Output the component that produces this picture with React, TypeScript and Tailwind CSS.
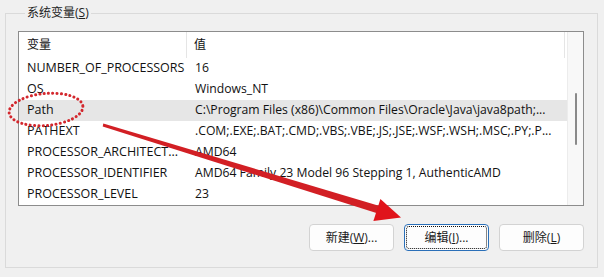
import React from "react";

interface EnvVar {
    name: string;
    value: string;
}

const rows: EnvVar[] = [
    { name: "NUMBER_OF_PROCESSORS", value: "16" },
    { name: "OS", value: "Windows_NT" },
    { name: "Path", value: "C:\\Program Files (x86)\\Common Files\\Oracle\\Java\\java8path;..." },
    { name: "PATHEXT", value: ".COM;.EXE;.BAT;.CMD;.VBS;.VBE;.JS;.JSE;.WSF;.WSH;.MSC;.PY;.P..." },
    { name: "PROCESSOR_ARCHITECT...", value: "AMD64" },
    { name: "PROCESSOR_IDENTIFIER", value: "AMD64 Family 23 Model 96 Stepping 1, AuthenticAMD" },
    { name: "PROCESSOR_LEVEL", value: "23" },
];

function WinButton({ label, hotkey, tail, focused }: { label: string; hotkey: string; tail?: string; focused?: boolean }) {
    return (
        <button
            className={`relative w-[85px] h-[27px] rounded-[4px] text-[12px] text-[#1a1a1a] flex items-center justify-center ${
                focused ? "bg-[#fdfdfd] border border-[#2a6fb8]" : "bg-[#fdfdfd] border border-[#d3d3d3]"
            }`}
        >
            {focused && <span className="absolute inset-[1px] rounded-[3px] border border-dotted border-[#111]" />}
            <span>
                {label}(<span className="underline">{hotkey}</span>){tail}
            </span>
        </button>
    );
}

export default function App() {
    return (
        <div className="relative w-[604px] h-[277px] overflow-hidden bg-[#f0f0f0] font-['Open_Sans','Noto_Sans_CJK_SC',sans-serif] text-[#111]">
            <fieldset className="ml-[5px] mt-[5px] w-[593px] h-[263px] border border-[#dadada] pl-[12px] pr-[12px]">
                <legend className="ml-[7px] px-[2px] text-[12px] leading-[16px] text-[#222]">
                    系统变量(<span className="underline">S</span>)
                </legend>

                <div className="mt-[10px] w-[566px] h-[175px] border border-[#8c8c8c] bg-white flex">
                    <div className="w-[548px] flex flex-col">
                        {/* header */}
                        <div className="h-[26px] flex text-[12px]">
                            <div className="w-[168px] pl-[8px] flex items-center border-r border-[#e5e5e5]">变量</div>
                            <div className="w-[378px] pl-[7px] flex items-center border-r border-[#e5e5e5]">值</div>
                        </div>
                        {rows.map((r) => (
                            <div
                                key={r.name}
                                className={`h-[21px] flex items-center whitespace-nowrap ${
                                    r.name === "Path" ? "bg-[#e6e6e6]" : ""
                                }`}
                            >
                                <div className="w-[169px] pl-[8px] overflow-hidden text-[12.5px]">{r.name}</div>
                                <div className="w-[372px] pl-[7px] overflow-hidden text-[12.2px]">{r.value}</div>
                            </div>
                        ))}
                    </div>
                    {/* scrollbar */}
                    <div className="w-[16px] bg-[#f8f8f8] border-l border-[#ececec] flex justify-center">
                        <div className="mt-[61px] w-[2px] h-[52px] rounded-full bg-[#8a8a8a]" />
                    </div>
                </div>

                <div className="mt-[18px] w-[566px] flex justify-end gap-[10px]">
                    <WinButton label="新建" hotkey="W" tail="..." />
                    <WinButton label="编辑" hotkey="I" tail="..." focused />
                    <WinButton label="删除" hotkey="L" />
                </div>
            </fieldset>

            {/* red annotation: circle + arrow */}
            <svg className="absolute inset-0 pointer-events-none" width="604" height="277" viewBox="0 0 604 277">
                <ellipse
                    cx="46"
                    cy="109.5"
                    rx="37"
                    ry="16"
                    transform="rotate(-5 46 109.5)"
                    fill="none"
                    stroke="#d3272d"
                    strokeWidth="3"
                    strokeLinecap="round"
                    strokeDasharray="0.1 4.2"
                />
                <polygon points="103.3,123.6 102.7,126.4 377.2,213.3 379.6,205.9" fill="#d21f24" />
                <polygon points="401,217.5 380.4,199 373.4,221" fill="#e0141b" />
            </svg>
        </div>
    );
}
